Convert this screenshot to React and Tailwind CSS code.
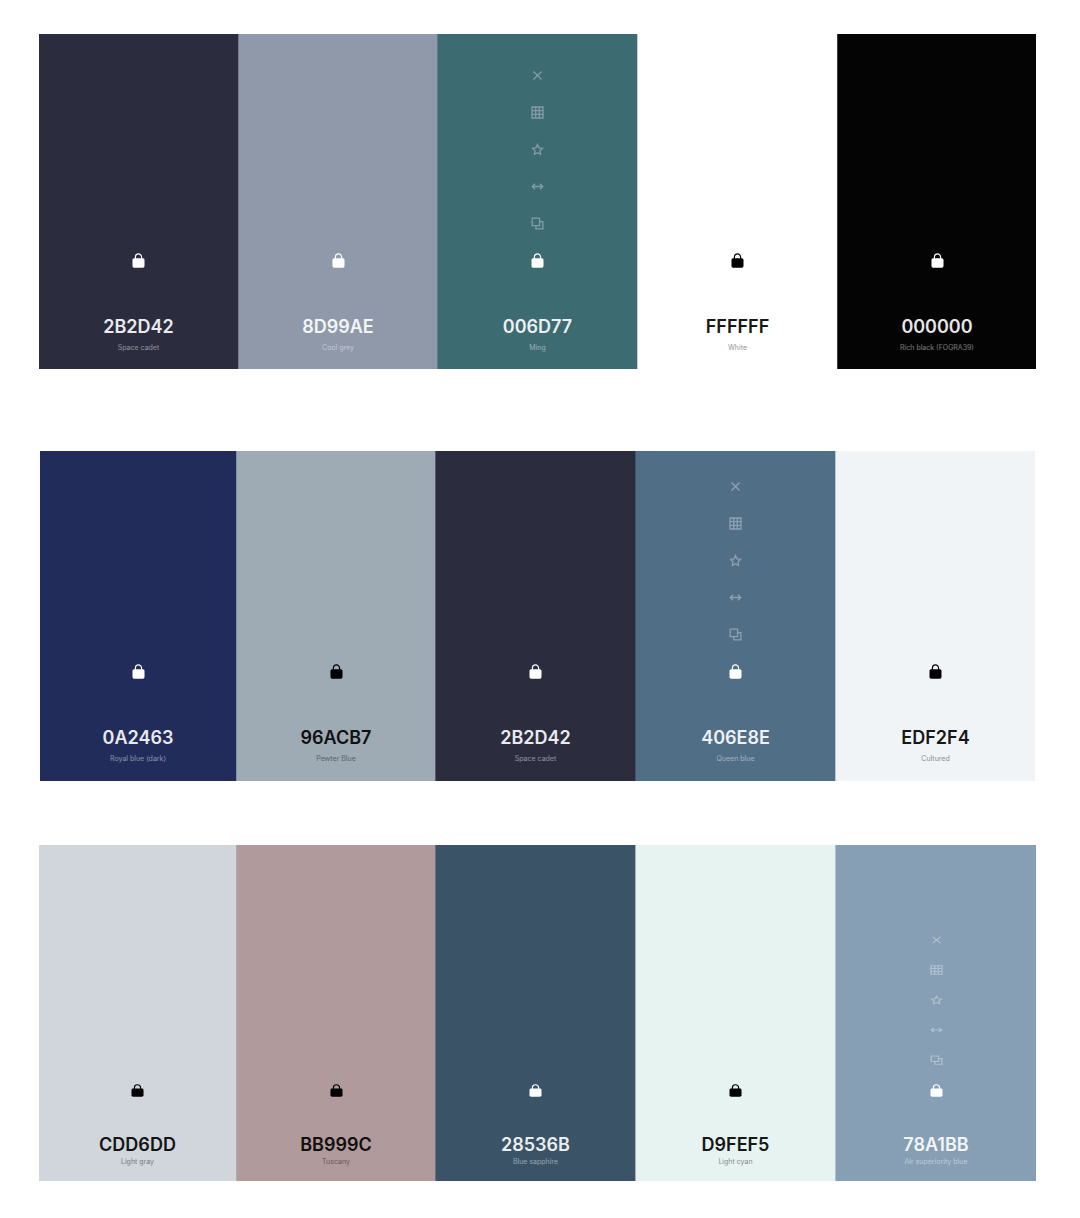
const palettes = [
  {
    label: "Space cadet palette",
    row: "mr-[44px] ml-[39px] h-[335px] grid-cols-[199fr_199fr_200fr_200fr_199fr]",
    column: "pb-[15px]",
    tool: "h-[37px]",
    toolIcon: "h-[13px]",
    lockIcon: "h-[15px]",
    code: "mt-[38px] text-lg leading-5",
    name: "mt-[5px]",
    swatches: [
      { code: "2B2D42", name: "Space cadet", fill: "bg-[#2b2d3f]", ink: "text-white", edge: "border-[#2b2d3f]" },
      { code: "8D99AE", name: "Cool grey", fill: "bg-[#9099aa]", ink: "text-white", edge: "border-[#757c8e]" },
      { code: "006D77", name: "Ming", fill: "bg-[#3d6b72]", ink: "text-white", edge: "border-[#5b7d88]", tools: true },
      { code: "FFFFFF", name: "White", fill: "bg-white", ink: "text-black", edge: "border-[#c3d0d3]" },
      { code: "000000", name: "Rich black (FOGRA39)", fill: "bg-[#040404]", ink: "text-white", edge: "border-[#404040]" },
    ],
  },
  {
    label: "Royal blue palette",
    row: "mt-[82px] mr-[45px] ml-10 h-[330px] grid-cols-[196fr_199fr_200fr_200fr_200fr]",
    column: "pb-4",
    tool: "h-[37px]",
    toolIcon: "h-[13px]",
    lockIcon: "h-[15px]",
    code: "mt-[38px] text-lg leading-5",
    name: "mt-[5px]",
    swatches: [
      { code: "0A2463", name: "Royal blue (dark)", fill: "bg-[#222c5a]", ink: "text-white", edge: "border-[#222c5a]" },
      { code: "96ACB7", name: "Pewter Blue", fill: "bg-[#9eabb5]", ink: "text-black", edge: "border-[#838fa4]" },
      { code: "2B2D42", name: "Space cadet", fill: "bg-[#2b2d3f]", ink: "text-white", edge: "border-[#555c6a]" },
      { code: "406E8E", name: "Queen blue", fill: "bg-[#516e87]", ink: "text-white", edge: "border-[#425469]", tools: true },
      { code: "EDF2F4", name: "Cultured", fill: "bg-[#f0f4f7]", ink: "text-black", edge: "border-[#b9c5d1]" },
    ],
  },
  {
    label: "Light gray palette",
    row: "mt-16 mr-[44px] ml-[39px] h-[336px] grid-cols-[197fr_199fr_200fr_200fr_201fr]",
    column: "pb-[13px]",
    tool: "h-[30px]",
    toolIcon: "h-[10px]",
    lockIcon: "h-[13px]",
    code: "mt-[30px] text-lg leading-5",
    name: "mt-px",
    swatches: [
      { code: "CDD6DD", name: "Light gray", fill: "bg-[#d1d5dc]", ink: "text-black", edge: "border-[#d1d5dc]" },
      { code: "BB999C", name: "Tuscany", fill: "bg-[#b09a9b]", ink: "text-black", edge: "border-[#b8a9ab]" },
      { code: "28536B", name: "Blue sapphire", fill: "bg-[#3a5366]", ink: "text-white", edge: "border-[#6b717f]" },
      { code: "D9FEF5", name: "Light cyan", fill: "bg-[#e6f3f0]", ink: "text-black", edge: "border-[#a5b3b9]" },
      { code: "78A1BB", name: "Air superiority blue", fill: "bg-[#869fb4]", ink: "text-white", edge: "border-[#b0c3cc]", tools: true },
    ],
  },
];

const tools = [
  { label: "Remove color", d: "M2.5 2.5l8 8M10.5 2.5l-8 8" },
  { label: "View shades", d: "M1 1h11v11H1zM4.7 1v11M8.3 1v11M1 4.7h11M1 8.3h11" },
  {
    label: "Save color",
    d: "M6.5 1.6l1.5 3.2 3.6.5-2.6 2.5.6 3.6-3.1-1.7-3.1 1.7.6-3.6-2.6-2.5 3.6-.5z",
  },
  { label: "Drag color", d: "M1.5 6.5h10M4 3.8L1.3 6.5 4 9.2M9 3.8l2.7 2.7L9 9.2" },
  { label: "Copy HEX", d: "M1.2 1.2h7.4v7.4H1.2zM8.6 4.7h3.3v7.2H4.9V8.6" },
];

function ToolIcon({ d, className }) {
  return (
    <svg
      viewBox="0 0 13 13"
      preserveAspectRatio="none"
      fill="none"
      stroke="currentColor"
      strokeWidth="1.3"
      aria-hidden="true"
      className={`w-[13px] ${className}`}
    >
      <path d={d} />
    </svg>
  );
}

function LockIcon({ className }) {
  return (
    <svg viewBox="0 0 13 15" preserveAspectRatio="none" aria-hidden="true" className={`w-[13px] ${className}`}>
      <path d="M3.4 6V4.2a3.1 3.3 0 0 1 6.2 0V6" fill="none" stroke="currentColor" strokeWidth="1.2" />
      <rect x="0.5" y="5.2" width="12" height="9.5" rx="1.6" fill="currentColor" />
    </svg>
  );
}

function Swatch({ swatch, palette }) {
  const button = `flex w-9 items-center justify-center ${palette.tool}`;
  return (
    <article
      className={`flex min-w-0 flex-col items-center justify-end border-l first:border-l-0 ${swatch.fill} ${swatch.ink} ${swatch.edge} ${palette.column}`}
    >
      {swatch.tools &&
        tools.map((tool) => (
          <button key={tool.label} type="button" aria-label={tool.label} className={`${button} opacity-35`}>
            <ToolIcon d={tool.d} className={palette.toolIcon} />
          </button>
        ))}
      <button type="button" aria-label={`Toggle lock on ${swatch.code}`} className={button}>
        <LockIcon className={palette.lockIcon} />
      </button>
      <h2 className={`font-semibold opacity-90 ${palette.code}`}>{swatch.code}</h2>
      <p className={`text-[7px] leading-3 whitespace-nowrap opacity-45 ${palette.name}`}>{swatch.name}</p>
    </article>
  );
}

export default function App() {
  return (
    <main className="bg-white pt-[34px] pb-9 font-['Inter',sans-serif]">
      {palettes.map((palette) => (
        <section key={palette.label} aria-label={palette.label} className={`grid ${palette.row}`}>
          {palette.swatches.map((swatch) => (
            <Swatch key={swatch.code} swatch={swatch} palette={palette} />
          ))}
        </section>
      ))}
    </main>
  );
}
